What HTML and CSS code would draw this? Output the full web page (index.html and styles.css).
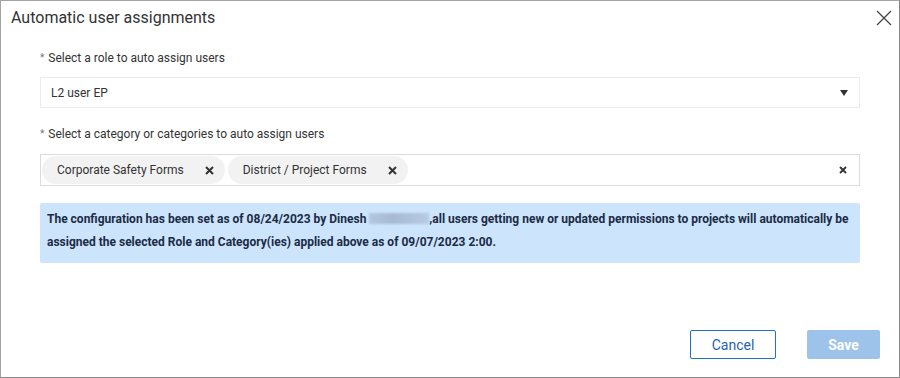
FILE: index.html
```html
<!doctype html>
<html>
<head>
<meta charset="utf-8">
<title>Automatic user assignments</title>
<link rel="stylesheet" href="styles.css">
</head>
<body>
	<div class="dialog">
		<div class="dialog_head">
			<span class="dialog_title">Automatic user assignments</span>
			<span class="dialog_close">
				<svg width="16" height="16" viewBox="0 0 16 16"><path d="M1 1 L15 15 M15 1 L1 15" stroke="#444" stroke-width="1.3" fill="none"/></svg>
			</span>
		</div>
		<div class="dialog_body">
			<div class="field_label"><span class="req">*</span>Select a role to auto assign users</div>
			<div class="select_box">
				<span>L2 user EP</span>
				<svg class="caret" width="8" height="6" viewBox="0 0 8 6"><path d="M0 0 H8 L4 6 Z" fill="#333"/></svg>
			</div>

			<div class="field_label second"><span class="req">*</span>Select a category or categories to auto assign users</div>
			<div class="multi_box">
				<span class="chip">Corporate Safety Forms<svg class="chip_x" width="9" height="9" viewBox="0 0 9 9"><path d="M1 1 L8 8 M8 1 L1 8" stroke="#333" stroke-width="2" fill="none"/></svg></span>
				<span class="chip">District / Project Forms<svg class="chip_x" width="9" height="9" viewBox="0 0 9 9"><path d="M1 1 L8 8 M8 1 L1 8" stroke="#333" stroke-width="2" fill="none"/></svg></span>
				<svg class="clear_x" width="8" height="8" viewBox="0 0 8 8"><path d="M1 1 L7 7 M7 1 L1 7" stroke="#333" stroke-width="1.8" fill="none"/></svg>
			</div>

			<div class="info">
				<div>The configuration has been set as of 08/24/2023 by Dinesh <span class="blur"></span>,all users getting new or updated permissions to projects will automatically be</div>
				<div>assigned the selected Role and Category(ies) applied above as of 09/07/2023 2:00.</div>
			</div>
		</div>
		<div class="dialog_foot">
			<span class="btn btn_cancel">Cancel</span>
			<span class="btn btn_save">Save</span>
		</div>
	</div>
</body>
</html>
```

FILE: styles.css
```css
body{ margin:0; background:#fff; font-family:Roboto, 'Liberation Sans', sans-serif; color:#333;}
.dialog{ width:900px; height:378px; box-sizing:border-box; border:1px solid #a3a3a3; border-right-color:#888; border-bottom-color:#888; display:flex; flex-direction:column; background:#fff;}
.dialog_head{ height:32px; display:flex; align-items:center; justify-content:space-between; padding:0 7px 0 10px;}
.dialog_title{ font-size:16px; color:#333;}
.dialog_close{ display:flex; margin-top:1px;}
.dialog_body{ padding:0 39px;}
.field_label{ font-size:12px; line-height:16px; margin:17px 0 11px; color:#333;}
.field_label.second{ margin:18px 0 12px;}
.req{ color:#777; font-size:10px; margin-right:4px; vertical-align:1px;}
.select_box{ height:31px; box-sizing:border-box; border:1px solid #ececec; display:flex; align-items:center; justify-content:space-between; padding:0 11px 0 10px; font-size:12px;}
.caret{ margin-top:1px;}
.multi_box{ height:32px; box-sizing:border-box; border:1px solid #dcdcdc; display:flex; align-items:center; padding:0 12px 0 1px; gap:3px; font-size:12px;}
.chip{ height:28px; display:flex; align-items:center; background:#f2f2f2; border-radius:14px; padding:0 11px 0 15px; color:#333;}
.chip_x{ margin-left:21px;}
.clear_x{ margin-left:auto;}
.info{ margin-top:17px; height:60px; box-sizing:border-box; background:#cce4fc; border-radius:2px; padding:5px 4px 0 7px; font-size:12px; line-height:23px; font-weight:bold; color:#1b2b44; white-space:nowrap;}
.blur{ display:inline-block; width:60px; height:11px; vertical-align:-1px; background:linear-gradient(90deg,#b3c7de,#a6bad4 40%,#b8cbe2); filter:blur(1px);}
.dialog_foot{ margin-top:auto; display:flex; justify-content:flex-end; gap:31px; padding:0 19px 18px 0;}
.btn{ height:29px; box-sizing:border-box; display:flex; align-items:center; justify-content:center; font-size:14px; border-radius:2px;}
.btn_cancel{ width:86px; border:1px solid #1f6fcf; color:#2461b8;}
.btn_save{ width:73px; background:#9dc3ea; color:#fff; font-weight:bold;}
```
